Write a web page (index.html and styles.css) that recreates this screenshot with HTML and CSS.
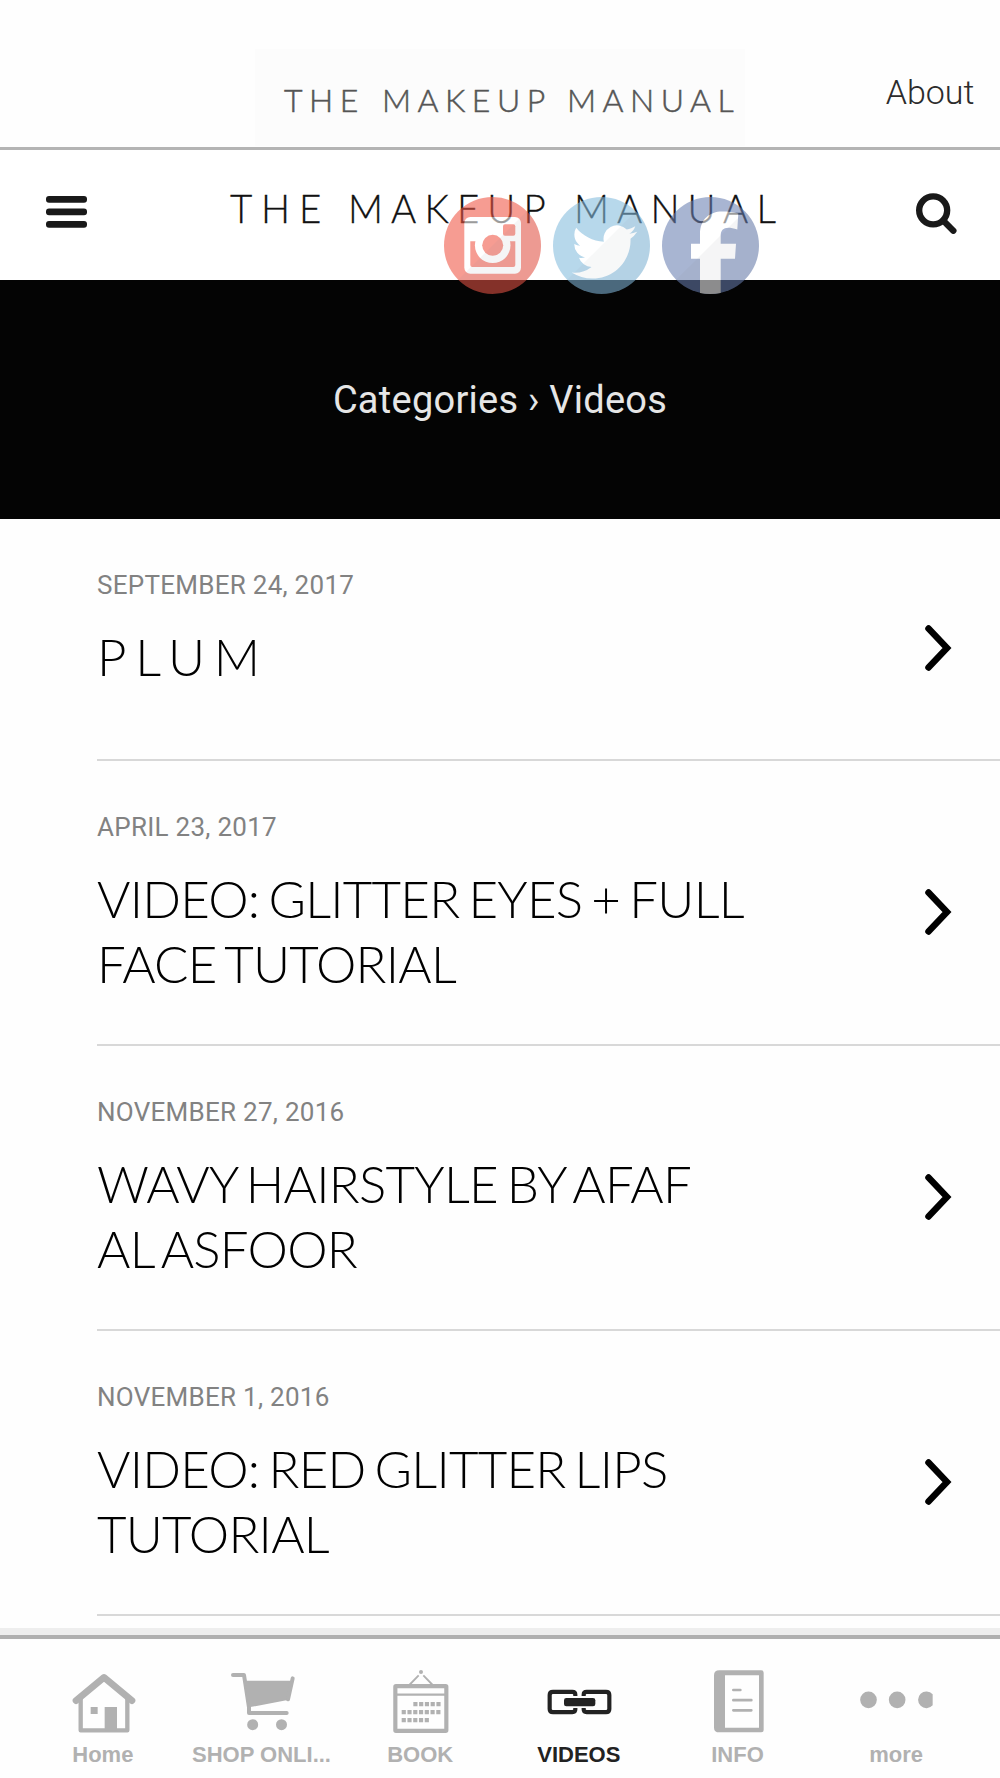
FILE: index.html
```html
<!DOCTYPE html>
<html lang="en">
<head>
<meta charset="utf-8">
<title>The Makeup Manual</title>
<link rel="stylesheet" href="styles.css">
</head>
<body>
<div class="app">
  <header class="topbar">
    <div class="topbar-logo"><span class="w1">THE</span><span class="w2">MAKEUP</span><span class="w3">MANUAL</span></div>
    <a class="topbar-link">About</a>
  </header>

  <div class="site-header">
    <svg class="menu-icon" viewBox="0 0 41 32"><g fill="#191919"><rect x="0" y="0" width="41" height="6.7" rx="3"/><rect x="0" y="12.6" width="41" height="6.7" rx="3"/><rect x="0" y="25.1" width="41" height="6.7" rx="3"/></g></svg>
    <div class="site-logo"><span class="w1">THE</span><span class="w2">MAKEUP</span><span class="w3">MANUAL</span></div>
    <svg class="search-icon" viewBox="408 429 123 123"><circle cx="459.500" cy="481" r="42" fill="none" stroke="#191919" stroke-width="19"/><path d="M491 513L520 542" stroke="#191919" stroke-width="19" stroke-linecap="round"/></svg>
    <div class="social">
      <svg viewBox="0 0 97 97">
        <circle cx="48.500" cy="48.500" r="48.500" fill="#f15645"/>
        <rect x="20.300" y="20" width="56.700" height="56.700" rx="6" fill="#fff"/>
        <path d="M26.300 44.300H71.300V68a2 2 0 0 1-2 2H28.300a2 2 0 0 1-2-2Z" fill="#f15645"/>
        <circle cx="48.700" cy="48.300" r="17.800" fill="#fff"/>
        <circle cx="48.700" cy="48.300" r="10.500" fill="#f15645"/>
        <rect x="59" y="27.300" width="12.300" height="11.500" rx="2" fill="#f15645"/>
        <path d="M82.800 14.200A48.500 48.500 0 0 1 14.200 82.800Z" fill="#234" opacity=".08"/>
      </svg>
      <svg viewBox="0 0 97 97">
        <circle cx="48.500" cy="48.500" r="48.500" fill="#85bcde"/>
        <path transform="translate(18.700 22.200) scale(2.730)" fill="#fff" d="M23.953 4.570a10 10 0 0 1-2.825.775 4.958 4.958 0 0 0 2.163-2.723c-.951.555-2.005.959-3.127 1.184a4.920 4.920 0 0 0-8.384 4.482C7.690 8.095 4.067 6.130 1.640 3.162a4.822 4.822 0 0 0-.666 2.475c0 1.710.87 3.213 2.188 4.096a4.904 4.904 0 0 1-2.228-.616v.06a4.923 4.923 0 0 0 3.946 4.827 4.996 4.996 0 0 1-2.212.085 4.936 4.936 0 0 0 4.604 3.417 9.867 9.867 0 0 1-6.102 2.105c-.39 0-.779-.023-1.170-.067a13.995 13.995 0 0 0 7.557 2.209c9.053 0 13.998-7.496 13.998-13.985 0-.21 0-.42-.015-.63A9.935 9.935 0 0 0 24 4.590z"/>
        <path d="M82.800 14.200A48.500 48.500 0 0 1 14.200 82.800Z" fill="#234" opacity=".06"/>
      </svg>
      <svg viewBox="0 0 97 97">
        <circle cx="48.500" cy="48.500" r="48.500" fill="#6b80b2"/>
        <path d="M38 96V61.700H29V46.700H38V37C38 22 48 14.500 60 14.500C66 14.500 71 15 76.300 16.500L75.300 32.500C64 29 58.700 31 58.700 39V46.700H74L73 61.700H58.700V96Q48 98 38 96Z" fill="#fff"/>
        <path d="M82.800 14.200A48.500 48.500 0 0 1 14.200 82.800Z" fill="#234" opacity=".08"/>
      </svg>
    </div>
  </div>

  <h1 class="hero">Categories › Videos</h1>

  <main class="posts">
    <article class="post post-short">
      <div><time>SEPTEMBER 24, 2017</time><h2><span class="spaced">PLUM</span></h2></div>
      <svg class="chevron" viewBox="0 0 27 46"><path d="M3.500 3.500L22 23L3.500 42.500" fill="none" stroke="#000" stroke-width="6.500" stroke-linecap="round"/></svg>
    </article>
    <article class="post">
      <div><time>APRIL 23, 2017</time><h2>VIDEO: GLITTER EYES + FULL<br>FACE TUTORIAL</h2></div>
      <svg class="chevron" viewBox="0 0 27 46"><path d="M3.500 3.500L22 23L3.500 42.500" fill="none" stroke="#000" stroke-width="6.500" stroke-linecap="round"/></svg>
    </article>
    <article class="post">
      <div><time>NOVEMBER 27, 2016</time><h2>WAVY HAIRSTYLE BY AFAF<br>AL ASFOOR</h2></div>
      <svg class="chevron" viewBox="0 0 27 46"><path d="M3.500 3.500L22 23L3.500 42.500" fill="none" stroke="#000" stroke-width="6.500" stroke-linecap="round"/></svg>
    </article>
    <article class="post">
      <div><time>NOVEMBER 1, 2016</time><h2>VIDEO: RED GLITTER LIPS<br>TUTORIAL</h2></div>
      <svg class="chevron" viewBox="0 0 27 46"><path d="M3.500 3.500L22 23L3.500 42.500" fill="none" stroke="#000" stroke-width="6.500" stroke-linecap="round"/></svg>
    </article>
  </main>

  <nav class="tabs">
    <a class="tab">
      <svg viewBox="202 210 216 192"><g fill="none" stroke="currentColor"><path d="M229 302L313 232L397 302" stroke-width="20" stroke-linecap="round" stroke-linejoin="round"/><path d="M243 292V391H383V292" stroke-width="13" stroke-linejoin="round"/></g><path d="M273 321h21v21h-21zM315 321h37v70h-37z" fill="currentColor"/></svg>
      <span>Home</span>
    </a>
    <a class="tab">
      <svg viewBox="678 210 216 192"><path d="M699 225H732L747 322V339H860" fill="none" stroke="currentColor" stroke-width="12" stroke-linecap="round" stroke-linejoin="round"/><path d="M736 242H874L863 300L747 322Z" fill="currentColor"/><path d="M878 235L864 298" stroke="currentColor" stroke-width="12" stroke-linecap="round"/><circle cx="758" cy="374" r="16.500" fill="currentColor"/><circle cx="844.500" cy="374" r="16.500" fill="currentColor"/></svg>
      <span>SHOP ONLI...</span>
    </a>
    <a class="tab">
      <svg viewBox="104 210 216 192"><g fill="none" stroke="currentColor"><rect x="135" y="258.500" width="153" height="134" rx="2" stroke-width="12.500"/><path d="M140 284H284" stroke-width="7"/><path d="M177 255L205 226M247 255L219 226" stroke-width="5.500"/><path d="M189 312.500H271" stroke-width="13" stroke-dasharray="12.500 4.800"/><path d="M154 336.500H271" stroke-width="13" stroke-dasharray="12.500 4.800"/><path d="M154 360.500H237" stroke-width="13" stroke-dasharray="12.500 4.800"/></g><circle cx="212" cy="216" r="6" fill="currentColor"/></svg>
      <span>BOOK</span>
    </a>
    <a class="tab active">
      <svg viewBox="580 210 216 192"><path d="M677 288V284Q677 275.500 668 275.500H610Q600 275.500 600 285V327Q600 336.500 610 336.500H668Q677 336.500 677 328V324M702 288V284Q702 275.500 711 275.500H769Q779 275.500 779 285V327Q779 336.500 769 336.500H711Q702 336.500 702 328V324" fill="none" stroke="currentColor" stroke-width="12.500"/><rect x="643" y="294" width="94" height="25" rx="7" fill="currentColor"/></svg>
      <span>VIDEOS</span>
    </a>
    <a class="tab">
      <svg viewBox="66 210 216 192"><path fill-rule="evenodd" d="M118 211H244Q251 211 251 218V390Q251 397 244 397H118Q102 397 102 383V226Q102 211 118 211ZM135 226V383H237V226Z" fill="currentColor"/><path d="M160 270H181M160 300.500H214M160 331H214" stroke="currentColor" stroke-width="8" stroke-linecap="round"/></svg>
      <span>INFO</span>
    </a>
    <a class="tab">
      <svg viewBox="542 210 216 192"><g fill="currentColor"><circle cx="564.500" cy="299.500" r="25"/><circle cx="650.500" cy="299.500" r="25"/><path d="M757 283A25 25 0 1 0 757 316Z"/></g></svg>
      <span>more</span>
    </a>
  </nav>
</div>
</body>
</html>
```
FILE: styles.css
```css
* { box-sizing: border-box; }

body {
  margin: 0;
  background: #fefefe;
  font-family: Roboto, "Liberation Sans", sans-serif;
}

.app {
  width: 1000px;
  height: 1778px;
  display: flex;
  flex-direction: column;
  overflow: hidden;
}

.topbar {
  height: 150px;
  padding-top: 49px;
  display: grid;
  grid-template-columns: 490px 255px;
  padding-left: 255px;
  border-bottom: 3px solid #b4b4b4;
}

.topbar-logo,
.site-logo {
  display: flex;
  font-family: Lato, sans-serif;
  font-weight: 300;
  white-space: nowrap;
}

.topbar-logo {
  height: 97px;
  padding: 32px 0 0 29px;
  background: #fcfcfc;
  color: #555;
  font-size: 32px;
  line-height: 38px;
  -webkit-text-stroke: .5px #555;
}
.topbar-logo span { letter-spacing: 6.500px; }
.topbar-logo .w1 { width: 98px; }
.topbar-logo .w2 { width: 185px; }

.topbar-link {
  justify-self: end;
  padding: 23px 25.500px 0 0;
  font-size: 34px;
  line-height: 40px;
  font-weight: 300;
  color: #2c2c2c;
}

.site-header {
  position: relative;
  height: 130px;
  display: flex;
  align-items: flex-start;
  background: #fff;
}
.menu-icon { width: 41px; height: 32px; margin: 46px 0 0 46px; }
.site-logo {
  width: 686px;
  margin: 35px 0 0 143px;
  font-size: 38.500px;
  line-height: 46px;
  color: #111;
  -webkit-text-stroke: .3px #111;
}
.site-logo span { letter-spacing: 8.100px; }
.site-logo .w1 { width: 118px; letter-spacing: 8.800px; }
.site-logo .w2 { width: 226px; }
.search-icon { width: 41px; height: 41px; margin-top: 43px; }

/* Share buttons float over the header and the banner */
.social {
  position: absolute;
  left: 444px;
  top: 47px;
  display: flex;
  gap: 11.800px;
  z-index: 2;
}
.social svg { width: 97px; height: 97px; opacity: .58; }

.hero {
  height: 239px;
  margin: 0;
  display: flex;
  justify-content: center;
  align-items: center;
  background: #040404;
  color: #e6e6e6;
  font-size: 38px;
  font-weight: 400;
  letter-spacing: .250px;
}

.posts { height: 1116px; flex: none; }

.post {
  height: 285px;
  margin-left: 97px;
  padding: 50px 48px 0 0;
  display: flex;
  justify-content: space-between;
  border-bottom: 2px solid #d8d8d8;
}
.post-short { height: 242px; }
.post time {
  display: block;
  color: #828282;
  font-size: 26px;
  line-height: 32px;
  letter-spacing: .270px;
}
.post h2 {
  margin: 23px 0 0;
  font-family: Lato, sans-serif;
  font-weight: 300;
  font-size: 51px;
  line-height: 65px;
  letter-spacing: -.750px;
  word-spacing: -4px;
  color: #000;
  white-space: nowrap;
}
.spaced { letter-spacing: 8.700px; }
.chevron { width: 27px; height: 46px; margin-top: 78px; flex: none; }
.post-short .chevron { margin-top: 56px; }

.tabs {
  height: 143px;
  padding: 31px 24px 0;
  display: grid;
  grid-template-columns: repeat(6, 1fr);
  border-top: 4px solid #b0b0b0;
  box-shadow: 0 -7px 0 #eee;
  background: #fefefe;
  flex: none;
}
.tab {
  display: flex;
  flex-direction: column;
  align-items: center;
  color: #b1b1b1;
  font: bold 22px/26px "Liberation Sans", Arial, sans-serif;
}
.tab svg { width: 72px; height: 64px; overflow: visible; }
.tab span { margin: 8px 1px 0 0; white-space: nowrap; }
.active { color: #222; }
```
